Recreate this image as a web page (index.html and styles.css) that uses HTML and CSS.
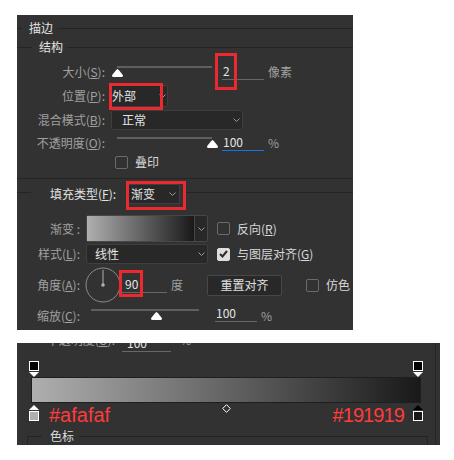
FILE: index.html
```html
<!DOCTYPE html>
<html lang="zh-CN">
<head>
<meta charset="utf-8">
<title>描边</title>
<link rel="stylesheet" href="styles.css">
</head>
<body>
<div class="page">
  <section class="panel ptop">
    <div class="legend l1"><span>描边</span></div>
    <div class="legend l2"><span>结构</span></div>

    <div class="row g1 r-size">
      <span class="lbl">大小(<u>S</u>):</span>
      <div class="slider sl-size"><svg class="thumb" style="left:0%" viewBox="0 0 11 8" width="11" height="8"><path d="M5.5 0C6.3 0 10.5 5.6 10.9 6.3C11.2 7.2 10.7 8 9.8 8H1.2C0.3 8-0.2 7.2 0.1 6.3C0.5 5.6 4.7 0 5.5 0Z" fill="#fff"/></svg></div>
      <span class="field f-size mark">2</span>
      <span class="unit">像素</span>
    </div>

    <div class="row g1 r-pos">
      <span class="lbl">位置(<u>P</u>):</span>
      <div class="sel sel-pos mark"><span>外部</span><svg class="chev" width="7" height="4" viewBox="0 0 7 4"><polyline points="0.5,0.5 3.5,3.5 6.5,0.5" fill="none" stroke="#9a9a9a"/></svg></div>
    </div>

    <div class="row g1 r-blend">
      <span class="lbl">混合模式(<u>B</u>):</span>
      <div class="sel sel-blend"><span>正常</span><svg class="chev" width="7" height="4" viewBox="0 0 7 4"><polyline points="0.5,0.5 3.5,3.5 6.5,0.5" fill="none" stroke="#9a9a9a"/></svg></div>
    </div>

    <div class="row g1 r-op">
      <span class="lbl">不透明度(<u>O</u>):</span>
      <div class="slider sl-op"><svg class="thumb" style="left:100%" viewBox="0 0 11 8" width="11" height="8"><path d="M5.5 0C6.3 0 10.5 5.6 10.9 6.3C11.2 7.2 10.7 8 9.8 8H1.2C0.3 8-0.2 7.2 0.1 6.3C0.5 5.6 4.7 0 5.5 0Z" fill="#fff"/></svg></div>
      <span class="field focus f-op">100</span>
      <span class="unit">%</span>
    </div>

    <div class="row r-over">
      <span class="cb"></span>
      <span class="txt">叠印</span>
    </div>

    <div class="sep"></div>

    <div class="legend lfill">
      <span class="ltxt">填充类型(<u>F</u>):</span>
      <div class="sel sel-fill mark"><span>渐变</span><svg class="chev" width="7" height="4" viewBox="0 0 7 4"><polyline points="0.5,0.5 3.5,3.5 6.5,0.5" fill="none" stroke="#9a9a9a"/></svg></div>
    </div>

    <div class="row g2 r-grad">
      <span class="lbl">渐变 :</span>
      <div class="gradsel">
        <span class="gfill"></span>
        <span class="garr"><svg class="chev" width="7" height="4" viewBox="0 0 7 4"><polyline points="0.5,0.5 3.5,3.5 6.5,0.5" fill="none" stroke="#9a9a9a"/></svg></span>
      </div>
      <span class="cb"></span>
      <span class="txt">反向(<u>R</u>)</span>
    </div>

    <div class="row g2 r-style">
      <span class="lbl">样式(<u>L</u>):</span>
      <div class="sel sel-style"><span>线性</span><svg class="chev" width="7" height="4" viewBox="0 0 7 4"><polyline points="0.5,0.5 3.5,3.5 6.5,0.5" fill="none" stroke="#9a9a9a"/></svg></div>
      <span class="cb on"><svg width="9" height="8" viewBox="0 0 9 8"><polyline points="1,4 3.5,6.5 8,1" fill="none" stroke="#2b2b2b" stroke-width="2"/></svg></span>
      <span class="txt">与图层对齐(<u>G</u>)</span>
    </div>

    <div class="row g2 r-angle">
      <span class="lbl">角度(<u>A</u>):</span>
      <svg class="dial" width="36" height="36" viewBox="0 0 36 36"><circle cx="18" cy="18" r="17" fill="none" stroke="#8c8c8c"/><line x1="18" y1="3" x2="18" y2="18" stroke="#b0b0b0"/><circle cx="18" cy="18" r="1.8" fill="#b0b0b0"/></svg>
      <span class="field f-angle mark">90</span>
      <span class="unit deg">度</span>
      <span class="btn">重置对齐</span>
      <span class="cb"></span>
      <span class="txt">仿色</span>
    </div>

    <div class="row g2 r-scale">
      <span class="lbl">缩放(<u>C</u>):</span>
      <div class="slider sl-scale"><svg class="thumb" style="left:61%" viewBox="0 0 11 8" width="11" height="8"><path d="M5.5 0C6.3 0 10.5 5.6 10.9 6.3C11.2 7.2 10.7 8 9.8 8H1.2C0.3 8-0.2 7.2 0.1 6.3C0.5 5.6 4.7 0 5.5 0Z" fill="#fff"/></svg></div>
      <span class="field f-scale">100</span>
      <span class="unit">%</span>
    </div>
  </section>

  <section class="panel pbot">
    <div class="gcontent">
      <div class="cutrow">
        <span class="lbl">不透明度(<u>O</u>):</span>
        <span class="field f-cut">100</span>
        <span class="unit">%</span>
      </div>
      <div class="stops-top">
        <svg width="10" height="16" viewBox="0 0 10 16"><rect x="0.5" y="0.5" width="9" height="9" fill="#000" stroke="#fff"/><path d="M0 11H10L5 16Z" fill="#fff"/></svg>
        <svg width="10" height="16" viewBox="0 0 10 16"><rect x="0.5" y="0.5" width="9" height="9" fill="#000" stroke="#fff"/><path d="M0 11H10L5 16Z" fill="#fff"/></svg>
      </div>
      <div class="gbar"></div>
      <div class="stops-bot">
        <div class="sb-left">
          <svg width="10" height="16" viewBox="0 0 10 16"><path d="M5 0L10 5H0Z" fill="#fff"/><rect x="0.5" y="6.5" width="9" height="9" fill="#afafaf" stroke="#fff"/></svg>
          <span class="hex">#afafaf</span>
        </div>
        <svg class="diamond" width="9" height="9" viewBox="0 0 9 9"><path d="M4.5 0.7L8.3 4.5L4.5 8.3L0.7 4.5Z" fill="none" stroke="#fff"/></svg>
        <div class="sb-right">
          <span class="hex hex-r">#191919</span>
          <svg width="10" height="16" viewBox="0 0 10 16"><path d="M5 0L10 5H0Z" fill="#000"/><rect x="0.5" y="6.5" width="9" height="9" fill="#191919" stroke="#fff"/></svg>
        </div>
      </div>
      <fieldset class="fs"><legend>色标</legend></fieldset>
    </div>
    <div class="vline"></div>
    <div></div>
  </section>
</div>
</body>
</html>
```

FILE: styles.css
```css
*, *::before, *::after { box-sizing: border-box; }
html, body { margin: 0; padding: 0; background: #fff; }
body {
  font-family: "Noto Sans CJK SC", "Noto Sans", sans-serif;
  font-size: 12px;
  line-height: 1;
  color: #a0a0a0;
}
u { text-decoration: underline; text-underline-offset: 1px; }

.page { padding: 15px 0 0 17px; }
.panel { background: #323232; }

.ptop { width: 336px; height: 315px; display: flex; flex-direction: column; }

/* legends */
.legend { display: flex; align-items: center; flex: none; color: #e2e2e2; }
.legend::before, .legend::after { content: ""; height: 1px; background: #242424; }
.legend::after { flex: 1; }
.l1 { margin-top: 3px; height: 20px; }
.l1::before { width: 5px; margin-right: 7px; }
.l1::after { margin-left: 4px; }
.l2 { height: 18px; }
.l2::before { width: 15px; margin-right: 7px; }
.l2::after { margin-left: 4px; }

.lfill { margin-top: 3px; height: 24px; }
.lfill::before { width: 14px; align-self: flex-start; margin-top: 10px; }
.lfill::after { align-self: flex-start; margin-top: 10px; margin-left: 6px; }
.lfill .ltxt { margin-left: 19px; white-space: nowrap; }

/* rows */
.row { display: flex; align-items: center; flex: none; }
.lbl { flex: none; text-align: right; white-space: nowrap; }
.g1 .lbl { width: 88px; }
.g2 .lbl { width: 63px; }
.txt { color: #d8d8d8; margin-left: 7px; white-space: nowrap; }
.unit { flex: none; margin-left: 4px; }

/* slider */
.slider { position: relative; flex: none; align-self: flex-start; height: 12px; }
.slider::before { content: ""; position: absolute; left: 0; right: 0; top: 0; height: 2px; background: #5f5f5f; }
.thumb { position: absolute; top: 3px; margin-left: -5.5px; }

/* fields */
.field {
  flex: none; align-self: flex-start;
  height: 17px; line-height: 16px;
  border-bottom: 1px solid #676767;
  color: #e4e4e4; padding-left: 1px;
}
.field.focus { border-bottom-color: #1473e6; }

/* selects */
.sel {
  flex: none; display: flex; align-items: center; justify-content: space-between;
  height: 20px; background: #282828; border: 1px solid #3f3f3f; border-radius: 2px;
  color: #e4e4e4; line-height: 18px;
}
.chev { flex: none; display: block; }

/* checkbox */
.cb { flex: none; width: 13px; height: 13px; border: 1px solid #6b6b6b; border-radius: 2px; }
.cb.on { background: #dedede; border-color: #dedede; display: flex; align-items: center; justify-content: center; }

/* annotation boxes */
.mark { position: relative; }
.mark::after { content: ""; position: absolute; border: 3px solid #ea2a2e; pointer-events: none; }

/* row: size */
.r-size { margin-top: 4px; height: 24px; }
.sl-size { margin-left: 12px; margin-top: 6px; width: 95px; }
.f-size { margin-left: 10px; margin-top: 3px; width: 42px; }
.f-size::after { left: -7px; top: -10px; width: 22px; height: 37px; }

/* row: position */
.r-pos { height: 24px; }
.sel-pos { margin-left: 5px; width: 58px; height: 22px; padding: 0 1px; }
.sel-pos::after { left: -2px; top: -3px; width: 54px; height: 27px; }

/* row: blend */
.r-blend { height: 24px; }
.sel-blend { margin-left: 6px; width: 132px; padding: 0 2px 0 10px; }

/* row: opacity */
.r-op { height: 22px; }
.sl-op { margin-left: 12px; margin-top: 5px; width: 95px; }
.f-op { margin-left: 10px; margin-top: 2px; width: 42px; }

/* overprint */
.r-over { height: 16px; padding-left: 98px; }

.sep { flex: none; margin-top: 8px; height: 1px; background: #242424; }

/* fill select */
.sel-fill { margin-left: 12px; width: 52px; padding: 0 3px 0 2px; }
.sel-fill::after { left: -3px; top: -4px; width: 60px; height: 29px; }

/* gradient row */
.r-grad { margin-top: 9px; height: 27px; }
.gradsel {
  flex: none; margin-left: 6px; width: 122px; height: 27px; display: flex;
  border: 1px solid #474747; border-radius: 2px; background: #282828;
}
.gfill { flex: none; width: 108px; border-right: 1px solid #474747; background: linear-gradient(90deg, #afafaf, #191919); }
.garr { flex: 1; display: flex; align-items: center; justify-content: center; }
.r-grad .cb, .r-style .cb { margin-left: 9px; }

/* style row */
.r-style { margin-top: 2px; height: 20px; }
.sel-style { margin-left: 6px; width: 122px; padding: 0 2px 0 8px; }

/* angle row */
.r-angle { margin-top: 3px; height: 36px; }
.dial { flex: none; margin-left: 5px; display: block; }
.f-angle { margin-left: 1px; margin-top: 9px; width: 45px; padding-left: 3px; }
.f-angle::after { left: -3px; top: -6px; width: 24px; height: 27px; }
.btn {
  flex: none; margin-left: 24px; width: 75px; height: 21px;
  border: 1px solid #474747; border-radius: 2px; background: #282828; color: #e0e0e0;
  display: flex; align-items: center; justify-content: center;
}
.r-angle .cb { margin-left: 24px; }

/* scale row */
.r-scale { height: 26px; }
.sl-scale { margin-left: 11px; margin-top: 6px; width: 108px; }
.f-scale { margin-left: 16px; margin-top: 2px; width: 42px; }

/* bottom panel */
.pbot {
  margin-top: 13px; width: 423px; height: 102px; overflow: hidden;
  display: grid; grid-template-columns: 418px 1px 1fr;
}
.gcontent { display: flex; flex-direction: column; min-width: 0; }
.vline { background: #262626; }

.cutrow { margin-top: -14px; height: 22px; display: flex; align-items: center; flex: none; }
.cutrow .lbl { width: 98px; }
.f-cut { margin-left: 7px; margin-top: 6px; width: 49px; padding-left: 5px; }
.cutrow .unit { margin-left: 9px; }

.stops-top { flex: none; margin-top: 10px; margin-left: 12px; width: 394px; height: 16px; display: flex; justify-content: space-between; }
.stops-top svg, .stops-bot svg { display: block; }
.gbar { flex: none; margin-left: 14px; width: 390px; height: 26px; border: 1px solid #1e1e1e; background: linear-gradient(90deg, #afafaf, #191919); }
.stops-bot { flex: none; margin-top: 2px; margin-left: 12px; width: 394px; height: 20px; display: grid; grid-template-columns: 1fr auto 1fr; }
.sb-left { display: flex; align-items: flex-start; }
.sb-right { display: flex; align-items: flex-start; justify-content: flex-end; }
.hex { font-family: "Liberation Sans", Arial, sans-serif; font-size: 20px; line-height: 20px; color: #ff3b3b; white-space: nowrap; }
.hex-r { letter-spacing: -0.9px; }
.sb-left .hex { margin-left: 10px; }
.sb-right .hex { margin-right: 9px; }
.diamond { margin-top: -1px; }

.fs { flex: none; margin: 3px 0 0 10px; width: 401px; min-width: 0; min-height: 30px; padding: 0 0 0 14px; border: 1px solid #242424; }
.fs legend { padding: 0 5px 0 8px; line-height: 16px; color: #dcdcdc; }
```
